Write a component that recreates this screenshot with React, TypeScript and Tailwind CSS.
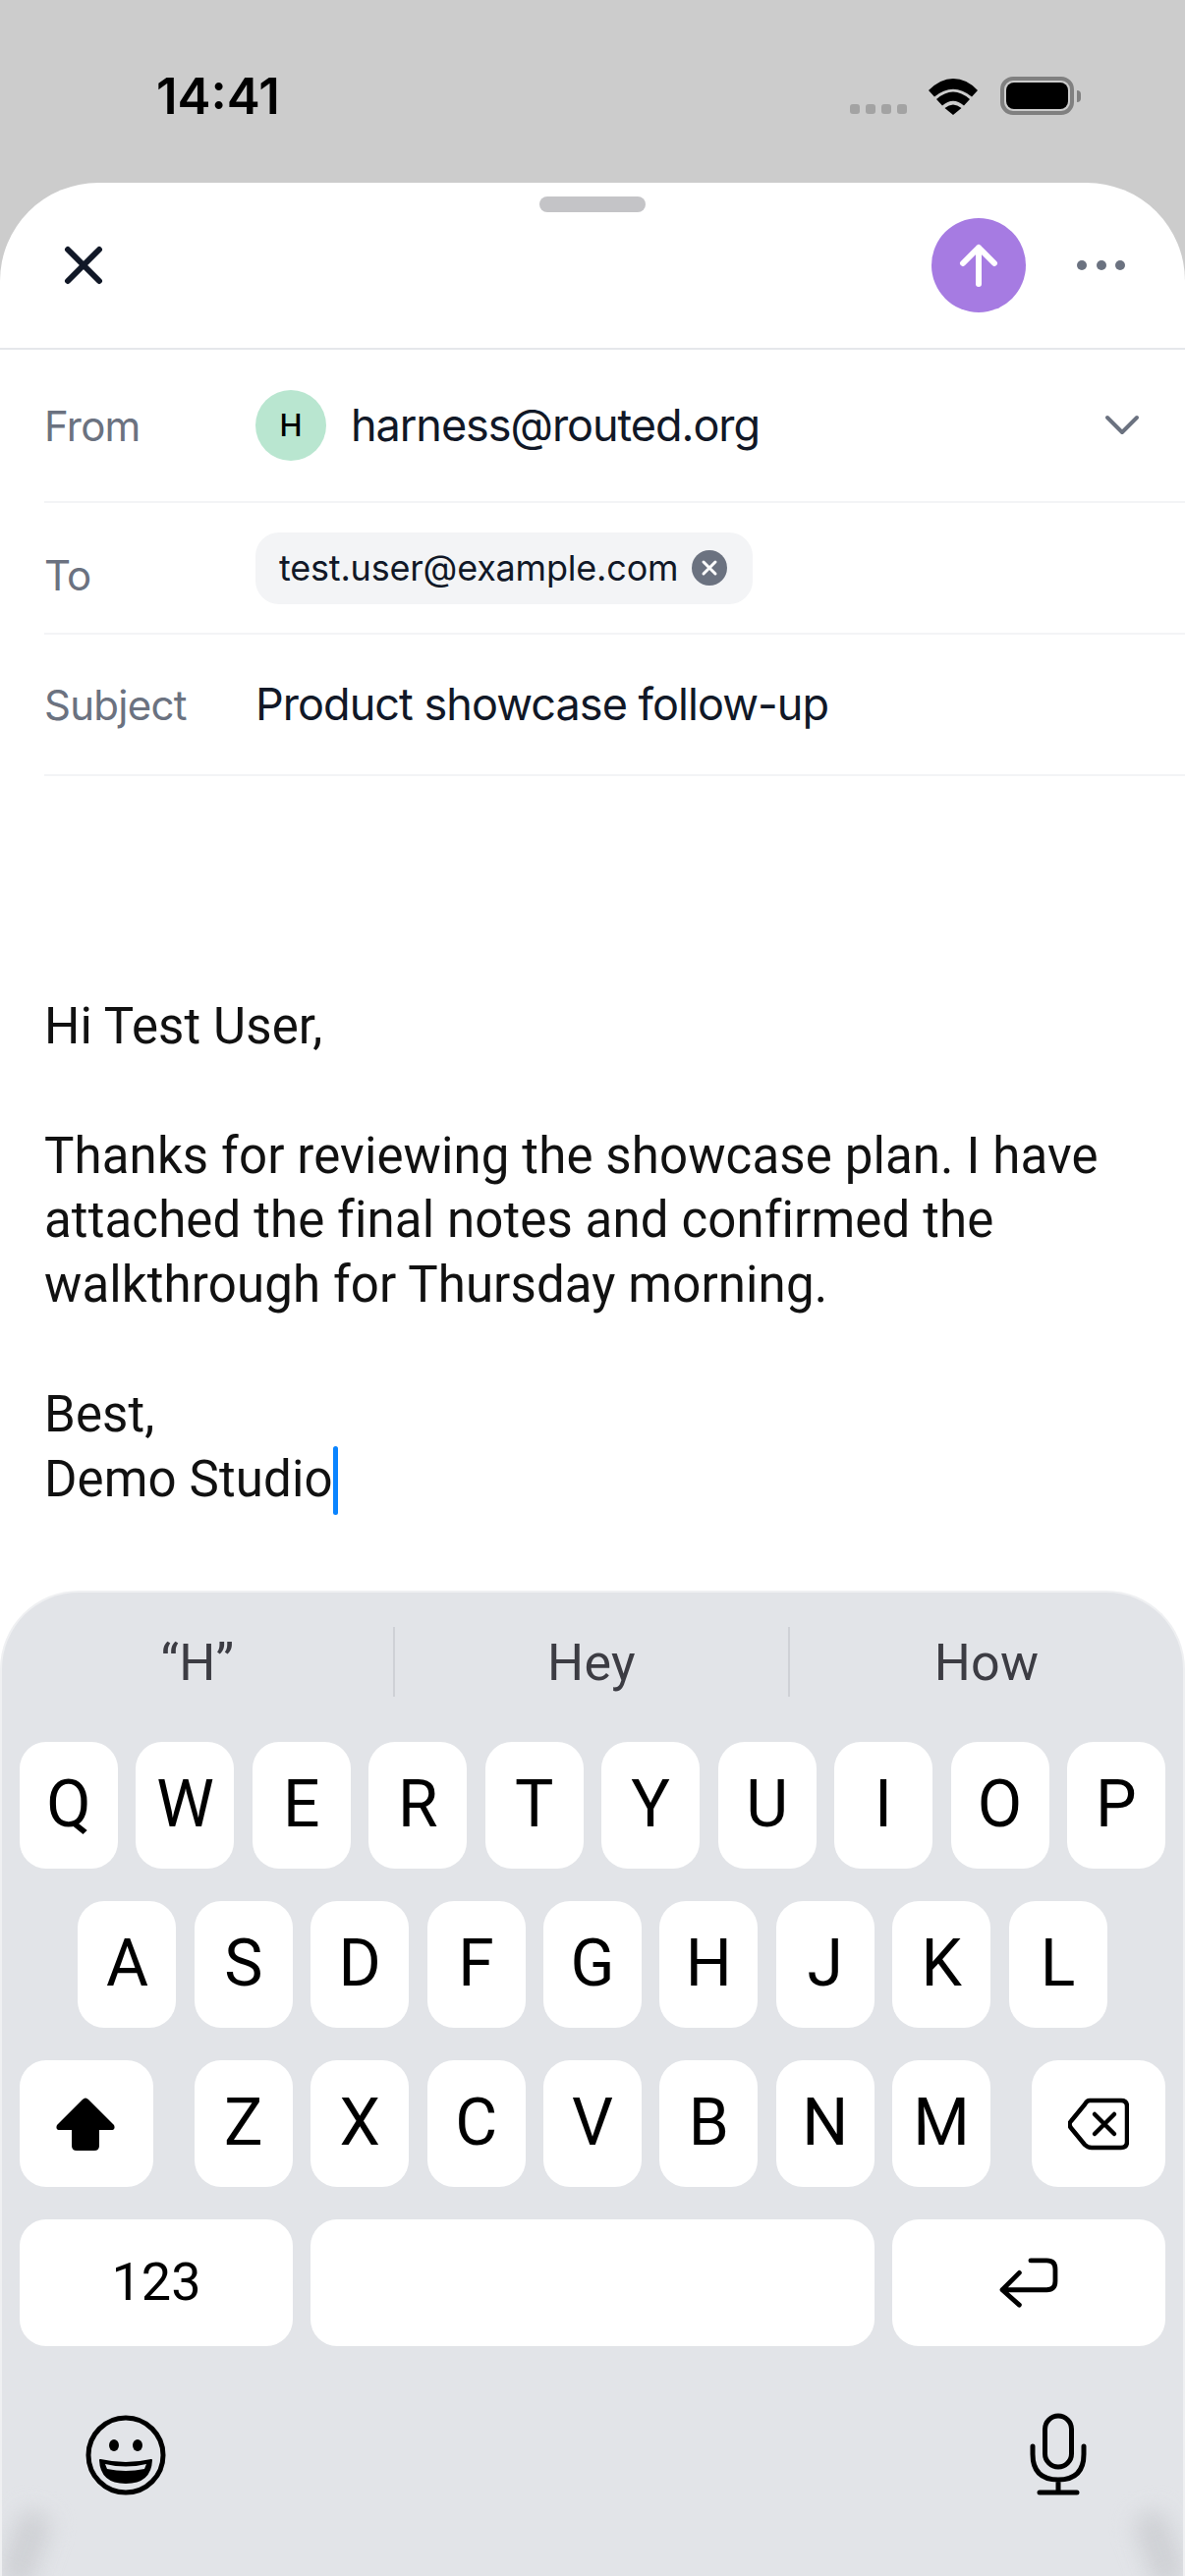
const row1 = ["Q", "W", "E", "R", "T", "Y", "U", "I", "O", "P"];
const row2 = ["A", "S", "D", "F", "G", "H", "J", "K", "L"];
const row3 = ["Z", "X", "C", "V", "B", "N", "M"];

function Key({ label }: { label: string }) {
  return (
    <div className="w-[100px] h-[129px] rounded-[27px] bg-white flex items-center justify-center pb-[2px] text-[66px] leading-none text-black">
      {label}
    </div>
  );
}

function StatusBar() {
  return (
    <div className="h-[186px] flex items-start justify-between pl-[159px] pr-[106px]">
      <div className="mt-[68px] text-[51px] leading-[60px] font-semibold text-black">14:41</div>
      <div className="flex items-end mt-[78px]">
        <div className="flex gap-[6px] mb-[1px]">
          <span className="w-[10px] h-[10px] rounded-[3px] bg-[#a3a3a3]" />
          <span className="w-[10px] h-[10px] rounded-[3px] bg-[#a3a3a3]" />
          <span className="w-[10px] h-[10px] rounded-[3px] bg-[#a3a3a3]" />
          <span className="w-[10px] h-[10px] rounded-[3px] bg-[#a3a3a3]" />
        </div>
        <svg width="52" height="38" viewBox="0 0 52 38" className="ml-[21px]">
          <path d="M1 13 L26 1 Q40 1 51 13 L45 19.5 Q26 4 7 19.5 Z M1 13 Q13 1 26 1" fill="#000" />
          <path d="M9 22 Q26 7 43 22 L37 28.5 Q26 19 15 28.5 Z" fill="#000" />
          <path d="M17.5 31 Q26 24 34.5 31 L26 38 Z" fill="#000" />
        </svg>
        <div className="ml-[22px] w-[75px] h-[39px] rounded-[13px] border-[4px] border-[#808080] p-[2px]">
          <div className="w-full h-full rounded-[8px] bg-black" />
        </div>
        <div className="w-[4px] h-[12px] mb-[13px] ml-[3px] rounded-r-full bg-[#808080]" />
      </div>
    </div>
  );
}

function Header() {
  return (
    <div className="relative h-[170px] border-b-2 border-[#e5e7eb] flex items-start justify-between pl-[64px] pr-[61px]">
      <div className="absolute left-[549px] top-[14px] w-[108px] h-[16px] rounded-full bg-[#c4c4c7]" />
      <svg width="42" height="42" viewBox="0 0 42 42" className="mt-[63px]" fill="none" stroke="#111827" strokeWidth="6" strokeLinecap="round">
        <path d="M5 5 L37 37 M37 5 L5 37" />
      </svg>
      <div className="flex items-center mt-[36px]">
        <div className="w-[96px] h-[96px] rounded-full bg-[#a67be2] flex items-center justify-center">
          <svg width="40" height="44" viewBox="0 0 40 44" fill="none" stroke="#fff" strokeWidth="6" strokeLinecap="round" strokeLinejoin="round">
            <path d="M20 41 V4 M4 20 L20 4 L36 20" />
          </svg>
        </div>
        <div className="flex gap-[9.5px] ml-[52px]">
          <span className="w-[10px] h-[10px] rounded-full bg-[#6b7280]" />
          <span className="w-[10px] h-[10px] rounded-full bg-[#6b7280]" />
          <span className="w-[10px] h-[10px] rounded-full bg-[#6b7280]" />
        </div>
      </div>
    </div>
  );
}

function Form() {
  return (
    <div className="pl-[45px]">
      <div className="h-[156px] border-b-2 border-[#f3f4f6] flex items-center">
        <div className="w-[215px] text-[42px] tracking-[-0.75px] text-[#6b7280]">From</div>
        <div className="w-[72px] h-[72px] rounded-full bg-[#b9e6d0] flex items-center justify-center text-[31px] font-medium text-black">H</div>
        <div className="ml-[25px] text-[45px] tracking-[-1.05px] text-[#111827]">harness@routed.org</div>
        <svg width="36" height="24" viewBox="0 0 36 24" className="ml-auto mr-[46px]" fill="none" stroke="#6b7280" strokeWidth="4" strokeLinecap="round" strokeLinejoin="round">
          <path d="M3 4 L18 19 L33 4" />
        </svg>
      </div>
      <div className="h-[134px] border-b-2 border-[#f3f4f6] flex items-center">
        <div className="w-[215px] text-[42px] tracking-[-0.75px] text-[#6b7280] mt-[14px]">To</div>
        <div className="h-[73px] w-[506px] rounded-[24px] bg-[#f3f4f6] flex items-center pl-[24px]">
          <span className="text-[36px] tracking-[-0.2px] text-[#111827]">test.user@example.com</span>
          <span className="ml-[14px] w-[36px] h-[36px] rounded-full bg-[#6b7280] flex items-center justify-center">
            <svg width="18" height="18" viewBox="0 0 18 18" fill="none" stroke="#fff" strokeWidth="3" strokeLinecap="round">
              <path d="M3 3 L15 15 M15 3 L3 15" />
            </svg>
          </span>
        </div>
      </div>
      <div className="h-[144px] border-b-2 border-[#f3f4f6] flex items-center">
        <div className="w-[215px] text-[42px] tracking-[-0.75px] text-[#6b7280]">Subject</div>
        <div className="text-[45px] tracking-[-0.95px] text-[#111827]">Product showcase follow-up</div>
      </div>
    </div>
  );
}

function Body() {
  return (
    <div className="flex-1 pl-[45px] pt-[222px] pr-[45px] font-['Roboto',sans-serif] text-[51px] tracking-[0.12px] leading-[65.8px] text-[#111]">
      <div>Hi Test User,</div>
      <div className="mt-[65.8px]">Thanks for reviewing the showcase plan. I have</div>
      <div>attached the final notes and confirmed the</div>
      <div>walkthrough for Thursday morning.</div>
      <div className="mt-[65.8px]">Best,</div>
      <div>
        <span className="relative">
          Demo Studio
          <span className="absolute left-full -top-[4px] w-[5px] h-[70px] rounded-full bg-[#0a84ff]" />
        </span>
      </div>
    </div>
  );
}

function Keyboard() {
  return (
    <div className="relative h-[1003px] rounded-t-[80px] bg-[#e2e4e8] border-t-2 border-x-2 border-[#eff0f2] overflow-hidden font-['Roboto',sans-serif]">
      <div className="flex items-center h-[71px] mt-[35px] text-[52px] tracking-[0.3px] text-[#3c3c43]">
        <div className="w-[398px] text-center pt-[3px]">“H”</div>
        <div className="w-[2px] h-[71px] bg-[#cfd1d6]" />
        <div className="w-[400px] text-center pt-[3px]">Hey</div>
        <div className="w-[2px] h-[71px] bg-[#cfd1d6]" />
        <div className="flex-1 text-center pt-[3px]">How</div>
      </div>
      <div className="flex flex-col gap-[33px] mt-[46px] px-[18px]">
        <div className="flex justify-between">
          {row1.map((k) => <Key key={k} label={k} />)}
        </div>
        <div className="flex justify-center gap-[18.4px]">
          {row2.map((k) => <Key key={k} label={k} />)}
        </div>
        <div className="flex justify-between">
          <div className="w-[136px] h-[129px] rounded-[27px] bg-white flex items-center justify-center">
            <svg width="62" height="54" viewBox="0 0 62 54" fill="#000" className="mr-[3px]">
              <path d="M28 2 Q31 -1 34 2 L60 28 Q62 33 57 33 H45 V49 Q45 54 40 54 H22 Q17 54 17 49 V33 H5 Q0 33 2 28 Z" />
            </svg>
          </div>
          <div className="flex gap-[18.4px]">
            {row3.map((k) => <Key key={k} label={k} />)}
          </div>
          <div className="w-[136px] h-[129px] rounded-[27px] bg-white flex items-center justify-center">
            <svg width="62" height="54" viewBox="0 0 62 54" fill="none" stroke="#000" strokeWidth="4.5" strokeLinecap="round" strokeLinejoin="round">
              <path d="M22 3 H54 Q60 3 60 9 V45 Q60 51 54 51 H24 Q20 51 17 48 L3 31 Q0 27 3 24 L17 7 Q19 3 22 3 Z" />
              <path d="M27 17 L47 37 M47 17 L27 37" />
            </svg>
          </div>
        </div>
        <div className="flex justify-between">
          <div className="w-[278px] h-[129px] rounded-[27px] bg-white flex items-center justify-center pb-[2px] text-[54px] text-black">123</div>
          <div className="w-[574px] h-[129px] rounded-[27px] bg-white" />
          <div className="w-[278px] h-[129px] rounded-[27px] bg-white flex items-center justify-center">
            <svg width="60" height="52" viewBox="0 0 62 54" fill="none" stroke="#000" strokeWidth="5" strokeLinecap="round" strokeLinejoin="round">
              <path d="M33 3 H50 Q59 3 59 12 V25 Q59 34 50 34 H3 M21 16 L3 34 L21 50" />
            </svg>
          </div>
        </div>
      </div>
      <div className="flex items-end justify-between mt-[68px] pl-[85px] pr-[98px]">
        <svg width="82" height="82" viewBox="0 0 82 82">
          <circle cx="41" cy="41" r="38" fill="none" stroke="#000" strokeWidth="5" />
          <ellipse cx="29" cy="31" rx="5" ry="6" fill="#000" />
          <ellipse cx="53" cy="31" rx="5" ry="6" fill="#000" />
          <path d="M15 46 Q41 52 67 46 Q66 69 41 69 Q16 69 15 46 Z" fill="#000" stroke="#000" strokeWidth="2" strokeLinejoin="round" />
          <path d="M20 50 Q41 55 62 50 L60 55 Q41 59 22 55 Z" fill="#e2e4e8" />
        </svg>
        <svg width="58" height="84" viewBox="0 0 58 84" fill="none" stroke="#000" strokeWidth="5" strokeLinecap="round">
          <rect x="15.5" y="3" width="27" height="52" rx="13.5" />
          <path d="M3 34 V42 Q3 68 29 68 Q55 68 55 42 V34 M29 68 V81 M10 81 H48" />
        </svg>
      </div>
      <div className="absolute left-[6px] bottom-[-12px] w-[36px] h-[80px] rounded-full bg-[#cfd1d5] blur-[11px] rotate-[20deg]" />
      <div className="absolute right-[6px] bottom-[-12px] w-[36px] h-[80px] rounded-full bg-[#cfd1d5] blur-[11px] -rotate-[20deg]" />
    </div>
  );
}

export default function App() {
  return (
    <div className="w-[1206px] h-[2622px] bg-[#cccccc] flex flex-col overflow-hidden font-['Inter',sans-serif]">
      <StatusBar />
      <div className="flex-1 flex flex-col rounded-t-[100px] bg-white">
        <Header />
        <Form />
        <Body />
        <Keyboard />
      </div>
    </div>
  );
}
